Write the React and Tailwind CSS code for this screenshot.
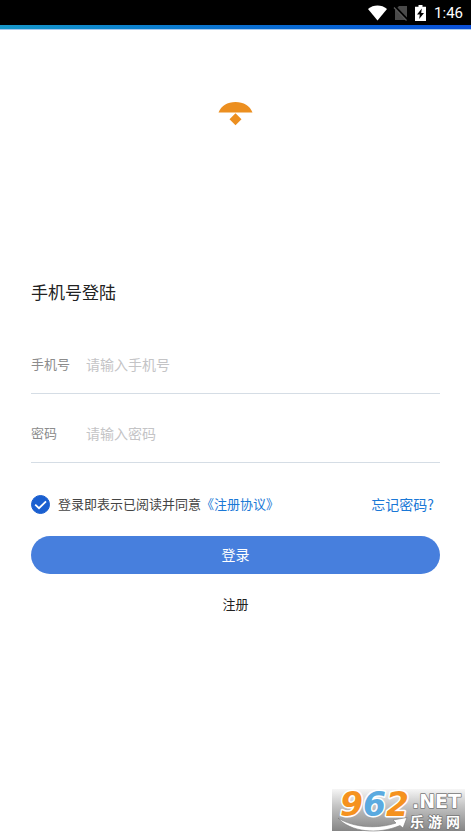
import { useState } from 'react';

const FIELDS = [
  { id: 'phone', label: '手机号', type: 'tel', placeholder: '请输入手机号' },
  { id: 'password', label: '密码', type: 'password', placeholder: '请输入密码' },
];

function StatusBar() {
  return (
    <header>
      <div className="h-[25px] bg-black flex items-center justify-end pr-2 text-white">
        <svg className="w-[19px] h-4 mr-1.5" viewBox="0 0 19 16" fill="currentColor">
          <path d="M0 4C5.5-.6 13.5-.6 19 4L9.5 15.5Z" />
        </svg>
        <svg className="w-4 h-4 mr-1.5" viewBox="0 0 16 16">
          <path d="M6 1H14V15H2V5Z" fill="#4a4a4a" />
          <path d="M1.5 1.5L14.5 15" stroke="#000" strokeWidth="2.6" />
          <path d="M1 2.5L13.5 15.5" stroke="#5c5c5c" strokeWidth="1.2" />
        </svg>
        <svg className="w-[11px] h-4 mr-2" viewBox="0 0 11 16">
          <path d="M3.5 0h4v1.7H11V16H0V1.7h3.5Z" fill="#fff" />
          <path d="M6.8 3.5L2 9.6h2.8L4.2 14L9 8H6.2Z" fill="#000" />
        </svg>
        <span className="font-['Roboto',sans-serif] text-[15px] leading-5">1:46</span>
      </div>
      <div className="h-1 bg-linear-to-r from-[#1797c9] via-[#0b70d0] to-[#0b4fd8]" />
      <div className="h-px bg-[#a9cbee]" />
    </header>
  );
}

function Watermark() {
  return (
    <svg
      className="absolute right-1.5 bottom-1.5 w-[133px] h-[42px] overflow-visible"
      viewBox="0 0 133 42"
      role="img"
      aria-label="962.NET 乐游网"
    >
      <defs>
        <linearGradient id="shade" x1="0" y1="0" x2="0" y2="1">
          <stop offset="0" stopColor="#f6f6f6" />
          <stop offset="0.4" stopColor="#c4c4c4" />
          <stop offset="1" stopColor="#858585" />
        </linearGradient>
      </defs>
      <rect width="133" height="42" fill="url(#shade)" />
      <path d="M6 29C22 39 46 40 64 34L61 31L75 28.5L71 39L68 36.5C46 46 18 43 6 29Z" fill="#fff" stroke="#777" strokeWidth="0.6" />
      <g fontFamily="DejaVu Sans" fontWeight="bold" stroke="#fff" paintOrder="stroke" strokeLinejoin="round">
        <text x="8" y="27" fontSize="33" fontStyle="italic" strokeWidth="3" fill="#f5921e">
          9<tspan fill="#5aaae0">6</tspan>2
        </text>
        <text x="80" y="19" fontSize="19" stroke="#777" strokeWidth="1.5" fill="#fff">.NET</text>
      </g>
      <g fontFamily="Noto Sans CJK SC, sans-serif" fontWeight="bold" fontSize="14" fill="#fff" stroke="#777" strokeWidth="1.5" paintOrder="stroke">
        <text x="78" y="38">乐</text>
        <text x="96" y="38">游</text>
        <text x="114" y="38">网</text>
      </g>
    </svg>
  );
}

export default function App() {
  const [agreed, setAgreed] = useState(true);

  return (
    <div className="relative min-h-screen bg-white font-['Noto_Sans_CJK_SC',sans-serif] text-[#333]">
      <StatusBar />

      <main className="px-[31px] pt-[72px]">
        <svg className="mx-auto w-9 h-6" viewBox="0 0 36 24" fill="#ec8f20">
          <path d="M.5 10.5C3 4 9.5 0 17.5 0S32 4 34.5 10.5Z" />
          <path d="M17.5 11.2L23.5 17.2L17.5 23.2L11.5 17.2Z" />
        </svg>

        <form onSubmit={(e) => e.preventDefault()}>
          <h1 className="mt-[154px] text-[17px] leading-6 text-[#222]">手机号登陆</h1>

          <div className="mt-[21px]">
            {FIELDS.map((f) => (
              <div key={f.id} className="flex items-center h-[69px] pt-2.5 border-b border-[#d5dde5]">
                <label htmlFor={f.id} className="w-[55px] shrink-0 text-[13px] leading-5 text-[#8c8c8c]">
                  {f.label}
                </label>
                <input
                  id={f.id}
                  type={f.type}
                  placeholder={f.placeholder}
                  className="flex-1 min-w-0 h-8 text-sm outline-none placeholder:text-[#c4c4c6]"
                />
              </div>
            ))}
          </div>

          <div className="flex items-center justify-between mt-[31px] pr-1.5">
            <div className="flex items-center">
              <label className="flex items-center gap-2 text-[13px] leading-5 text-[#444]">
                <span className="grid place-items-center">
                  <input
                    type="checkbox"
                    checked={agreed}
                    onChange={(e) => setAgreed(e.target.checked)}
                    className="col-start-1 row-start-1 appearance-none w-[19px] h-[19px] rounded-full border border-[#1a5fd0] checked:bg-[#1a5fd0]"
                  />
                  {agreed && (
                    <svg className="col-start-1 row-start-1 w-[19px] h-[19px] pointer-events-none" viewBox="0 0 19 19" fill="none" stroke="#fff" strokeWidth="1.8">
                      <path d="M4.2 9.6L8 13.2L15 6.4" />
                    </svg>
                  )}
                </span>
                登录即表示已阅读并同意
              </label>
              <a href="#agreement" className="text-[13px] leading-5 text-[#1a78d6]">《注册协议》</a>
            </div>
            <a href="#forgot" className="text-sm leading-5 text-[#1a78d6]">忘记密码?</a>
          </div>

          <button type="submit" className="mt-[22px] w-full h-[38px] pb-0.5 rounded-full bg-[#477fdd] text-sm text-white">
            登录
          </button>
          <button type="button" className="block mx-auto mt-5 text-[13px] leading-5 text-[#222]">注册</button>
        </form>
      </main>

      <Watermark />
    </div>
  );
}
